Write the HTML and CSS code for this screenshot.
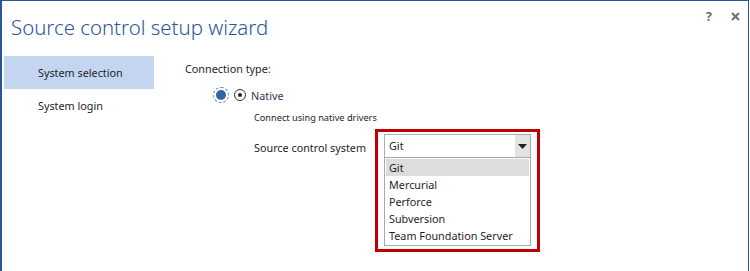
FILE: index.html
```html
<!DOCTYPE html>
<html lang="en">
<head>
    <meta charset="UTF-8">
    <meta name="viewport" content="width=device-width, initial-scale=1.0">
    <title>Source control setup wizard</title>
    <link rel="stylesheet" href="styles.css">
</head>
<body>

<div class="window">

    <!-- Title bar -->
    <div class="titlebar">
        <h1 class="title">Source control setup wizard</h1>
        <div class="window-buttons">
            <span class="win-btn help">?</span>
            <span class="win-btn close">
                <svg width="9" height="9" viewBox="0 0 9 9">
                    <path d="M1 1 L8 8 M8 1 L1 8" stroke="#6f6f6f" stroke-width="2"/>
                </svg>
            </span>
        </div>
    </div>

    <div class="wizard">
        <!-- Steps -->
        <ul class="steps">
            <li class="step active">System selection</li>
            <li class="step">System login</li>
        </ul>

        <!-- Page content -->
        <div class="page">
            <p class="section-label">Connection type:</p>

            <div class="radio-row">
                <span class="radio-focus"><span class="radio-dot"></span></span>
                <span class="radio"><span class="radio-inner"></span></span>
                <span class="radio-label">Native</span>
            </div>
            <p class="radio-note">Connect using native drivers</p>

            <div class="field-row">
                <span class="field-label">Source control system</span>
                <div class="highlight-box">
                    <div class="combo">
                        <span class="combo-value">Git</span>
                        <span class="combo-arrow">
                            <svg width="9" height="5" viewBox="0 0 9 5"><path d="M0 0 H9 L4.5 5 Z" fill="#222"/></svg>
                        </span>
                    </div>
                    <ul class="combo-list">
                        <li class="combo-item selected">Git</li>
                        <li class="combo-item">Mercurial</li>
                        <li class="combo-item">Perforce</li>
                        <li class="combo-item">Subversion</li>
                        <li class="combo-item">Team Foundation Server</li>
                    </ul>
                </div>
            </div>
        </div>
    </div>

</div>

</body>
</html>
```

FILE: styles.css
```css
body {
    margin: 0;
    font-family: "Noto Sans", "Open Sans", sans-serif;
    font-size: 10.8px;
    color: #1e1e1e;
    background: #fff;
}

.window {
    width: 749px;
    height: 271px;
    box-sizing: border-box;
    border-top: 1px solid #2b579a;
    border-left: 2px solid #2b579a;
    border-right: 1px solid #2b579a;
    overflow: hidden;
}

.titlebar {
    display: flex;
    justify-content: space-between;
    height: 55px;
}

.title {
    margin: 0;
    padding: 11px 0 0 9px;
    font-size: 20.4px;
    font-weight: 300;
    color: #2b5797;
    line-height: 30px;
}

.window-buttons {
    display: flex;
    gap: 18px;
    padding: 7px 8px 0 0;
    height: 16px;
}

.win-btn {
    display: flex;
    align-items: center;
    height: 16px;
    color: #6f6f6f;
    font-weight: bold;
    font-size: 13px;
}

.help {
    margin-right: 1px;
}

.wizard {
    display: flex;
}

/* left steps list */
.steps {
    list-style: none;
    margin: 0 0 0 2px;
    padding: 0;
    width: 150px;
}

.step {
    height: 33px;
    line-height: 34px;
    padding-left: 34px;
}

.step.active {
    background: #c4d5f1;
}

.page {
    padding-left: 31px;
}

.section-label {
    margin: 4px 0 0;
    line-height: 18px;
}

.radio-row {
    display: flex;
    align-items: center;
    margin: 8px 0 0 28px;
    height: 18px;
}

.radio-focus {
    width: 14px;
    height: 14px;
    border: 1px dashed #5b86c6;
    border-radius: 50%;
    display: flex;
    align-items: center;
    justify-content: center;
}

.radio-dot {
    width: 10px;
    height: 10px;
    border-radius: 50%;
    background: #3463a8;
}

.radio {
    width: 10px;
    height: 10px;
    margin-left: 5px;
    border: 1px solid #333;
    border-radius: 50%;
    display: flex;
    align-items: center;
    justify-content: center;
}

.radio-inner {
    width: 4px;
    height: 4px;
    border-radius: 50%;
    background: #222;
}

.radio-label {
    margin-left: 5px;
    color: #3b2f52;
}

.radio-note {
    margin: 7px 0 0 69px;
    font-size: 9.2px;
    line-height: 14px;
}

.field-row {
    display: flex;
    margin: 4px 0 0 69px;
}

.field-label {
    margin-top: 11px;
    width: 121px;
}

.highlight-box {
    border: 3px solid #c00000;
    padding: 2px 6px 3px 6px;
}

.combo {
    display: flex;
    justify-content: space-between;
    width: 147px;
    height: 23px;
    box-sizing: border-box;
    border: 1px solid #abadb3;
    border-bottom: none;
}

.combo-value {
    padding-left: 4px;
    line-height: 22px;
}

.combo-arrow {
    width: 15px;
    background: #e3e3e3;
    display: flex;
    align-items: center;
    justify-content: center;
}

.combo-list {
    list-style: none;
    margin: 0;
    padding: 1px;
    width: 147px;
    box-sizing: border-box;
    border: 1px solid #a9a9a9;
}

.combo-item {
    height: 17px;
    line-height: 17px;
    padding-left: 3px;
}

.combo-item.selected {
    background: #dddddd;
}
```
